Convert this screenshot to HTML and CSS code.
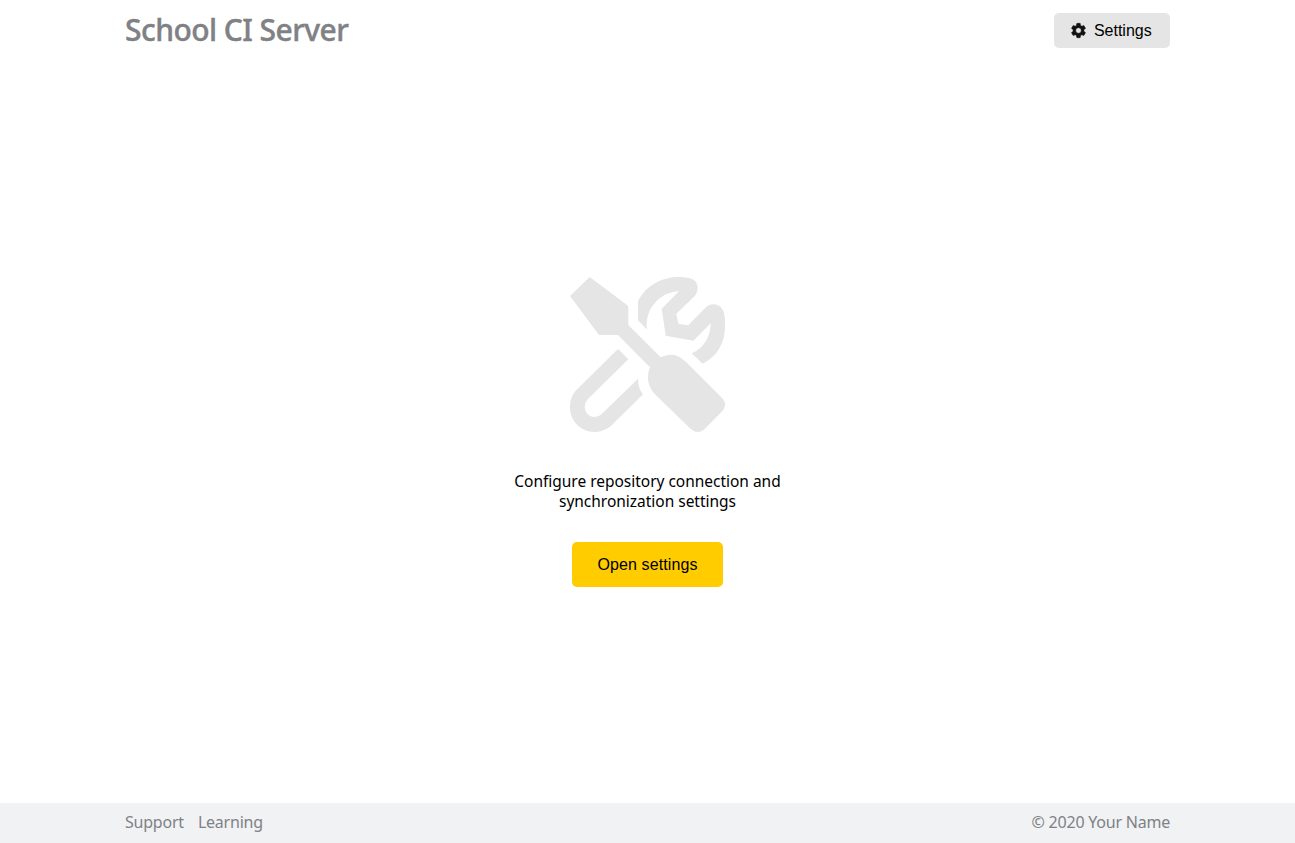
FILE: index.html
```html
<!DOCTYPE html>
<html lang="en">
<head>
<meta charset="utf-8">
<title>School CI Server</title>
<link rel="stylesheet" href="styles.css">
</head>
<body>
<header class="header">
  <h1 class="title">School CI Server</h1>
  <button class="button button-small">
    <svg class="gear" viewBox="2 2 20 20" aria-hidden="true"><path d="M19.14 12.94c.04-.3.06-.61.06-.94 0-.32-.02-.64-.07-.94l2.03-1.58a.49.49 0 0 0 .12-.61l-1.92-3.32a.488.488 0 0 0-.59-.22l-2.39.96c-.5-.38-1.03-.7-1.62-.94l-.36-2.54a.484.484 0 0 0-.48-.41h-3.84c-.24 0-.43.17-.47.41l-.36 2.54c-.59.24-1.13.57-1.62.94l-2.39-.96c-.22-.08-.47 0-.59.22L2.74 8.87c-.12.21-.08.47.12.61l2.03 1.58c-.05.3-.09.63-.09.94s.02.64.07.94l-2.03 1.58a.49.49 0 0 0-.12.61l1.92 3.32c.12.22.37.29.59.22l2.39-.96c.5.38 1.03.7 1.62.94l.36 2.54c.05.24.24.41.48.41h3.84c.24 0 .44-.17.47-.41l.36-2.54c.59-.24 1.13-.56 1.62-.94l2.39.96c.22.08.47 0 .59-.22l1.92-3.32c.12-.22.07-.47-.12-.61l-2.01-1.58zM12 15.6A3.6 3.6 0 1 1 12 8.4a3.6 3.6 0 0 1 0 7.2z"/></svg>
    <span>Settings</span>
  </button>
</header>
<main class="main">
  <svg class="tools" viewBox="570 277 155 155" aria-hidden="true">
    <path d="M589.7 277L570 296L599 335H618L650 367.3C648.7 370 648 374 648 378C648 384 651 390.300 655.7 395L690 428.300C694.500 433 700.500 433 704.300 429.300L721.700 411.700C726 407.500 726 402.500 722.300 398.300L687.300 363.300C682.500 358.300 677.500 354.700 671.700 354.700C667.500 354.700 664 355.500 660.700 357.300L628.300 325V306Z"/>
    <path d="M618 349L628.300 359.300L587.700 399.300Q584.700 402.500 584.700 406.700C584.700 412.500 589 417 594.700 417Q598.700 417 602 413.700L638 378.700C638 385 639.500 390 643 394.300L612.700 424.300C608 429 601.500 432 594.700 432C581 432 570 421 570 407.500C570 400.500 572 394.300 576.700 389.700Z"/>
    <path d="M638 300.700V320.300L646.700 329.300C646 319 648.500 310 654.500 303.500C660.500 296 669.500 291.500 679 291.300L661.700 308.700L665.700 335.700L693.300 340.700L710.700 323.300C710.500 335 705 348 691.700 353.300L702.700 363.700C718 356 725 342 725 326.700V320C725 311 721 304.300 713.300 304.300Q708.500 304.500 705 308.300L688.300 325.300L678.300 323.700L676.300 313.700L695 295.700Q697.700 292.500 697.700 288.300C697.700 283.500 695.500 280.500 692 279C688 277.500 683.500 277 679 277C662 277 646.500 285 638 300.700Z"/>
  </svg>
  <p class="hint">Configure repository connection and<br>synchronization settings</p>
  <button class="button button-primary">Open settings</button>
</main>
<footer class="footer">
  <nav class="links"><a class="support">Support</a><a class="learning">Learning</a></nav>
  <span class="copyright">© 2020 Your Name</span>
</footer>
</body>
</html>
```
FILE: styles.css
```css
* { box-sizing: border-box; }
body {
  margin: 0;
  height: 100vh;
  display: flex;
  flex-direction: column;
  background: #fff;
  color: #000;
  font: 16px/20px "Noto Sans", "Open Sans", sans-serif;
}
.header, .footer {
  display: flex;
  justify-content: space-between;
  padding: 0 125px;
}
.header { height: 61px; align-items: center; }
.title {
  margin: 0 0 2px;
  color: #7f8184;
  font-size: 30px;
  line-height: 36px;
  font-weight: 500;
  letter-spacing: -0.55px;
  -webkit-text-stroke: 0.4px #7f8184;
}
.button {
  display: flex;
  align-items: center;
  justify-content: center;
  border: 0;
  padding: 0;
  border-radius: 5px;
  color: #000;
  font: 16px/20px "Liberation Sans", Arial, sans-serif;
}
.button-small { width: 116px; height: 35px; gap: 8px; padding-right: 1.4px; background: #e5e5e5; }
.gear { width: 15px; height: 15px; fill: #111; stroke: #111; stroke-width: 0.6px; overflow: visible; }
.main {
  flex: 1;
  display: flex;
  flex-direction: column;
  align-items: center;
  padding-top: 216px;
}
.tools { width: 155px; height: 155px; fill: #e5e5e5; }
.hint { margin: 39px 0 31px; text-align: center; font-size: 15.5px; letter-spacing: -0.02px; }
.button-primary { width: 151px; height: 45px; background: #fc0; letter-spacing: 0.1px; }
.footer { height: 40px; align-items: center; padding-bottom: 2px; background: #f0f2f4; color: #7f8184; letter-spacing: -0.22px; }
.links { display: flex; gap: 14px; }
```
